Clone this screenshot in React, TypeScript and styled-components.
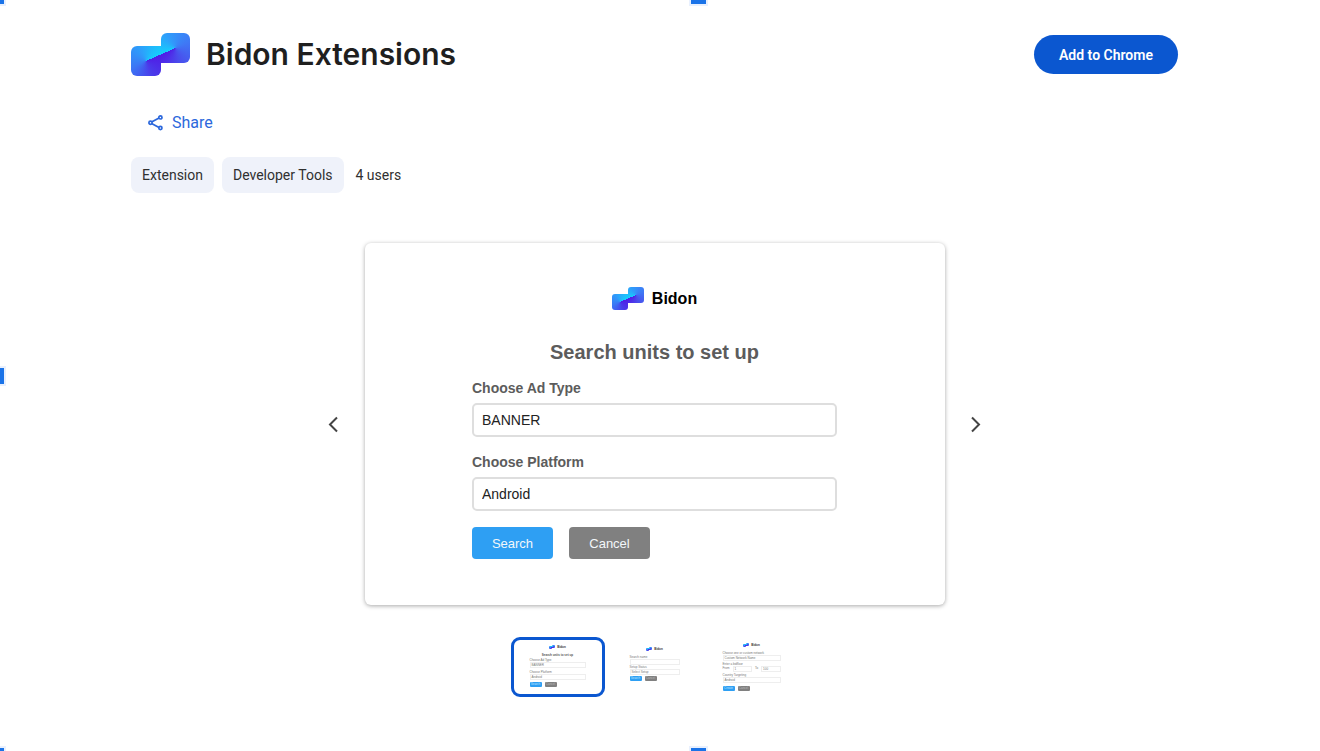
import React, { useState } from "react";
import styled, { createGlobalStyle } from "styled-components";

const GlobalStyle = createGlobalStyle`
  *, *::before, *::after { box-sizing: border-box; }
  body { margin: 0; background: #fff; color: #1f1f1f; font-family: Roboto, "Liberation Sans", sans-serif; }
  button, select { font: inherit; margin: 0; cursor: pointer; }
  h1, h2 { margin: 0; }
`;

const Page = styled.div`
  position: relative;
  min-height: 100vh;
  padding: 33px 142px 48px 131px;
  overflow: hidden;
`;

/* Selection handles that lie over the edges of the page */
const Handle = styled.span<{ $x: string; $y: string; $w: number; $h: number }>`
  position: absolute;
  left: ${(p) => p.$x};
  top: ${(p) => p.$y};
  width: ${(p) => p.$w}px;
  height: ${(p) => p.$h}px;
  background: #1a73e8;
  box-shadow: 0 0 0 2px #e8f0fe;
`;

const Header = styled.header`
  display: flex;
  align-items: center;
  gap: 16px;
`;

const Title = styled.h1`
  flex: 1;
  font-family: Inter, Roboto, sans-serif;
  font-size: 30px;
  line-height: 43px;
  font-weight: 600;
`;

const AddButton = styled.button`
  width: 144px;
  height: 39px;
  border: 0;
  border-radius: 20px;
  background: #0b57d0;
  color: #fff;
  font-size: 14px;
  font-weight: 600;
`;

const LogoBox = styled.span<{ $s: number }>`
  display: flex;
  flex: none;
  width: ${(p) => p.$s * 2 - (p.$s > 20 ? 1 : 0)}px;
  height: ${(p) => Math.round(p.$s * 1.43)}px;
`;

const LogoTile = styled.span<{ $s: number; $upper?: boolean }>`
  flex: 1 0 0;
  height: ${(p) => p.$s}px;
  align-self: ${(p) => (p.$upper ? "flex-start" : "flex-end")};
  border-radius: ${(p) => {
    const r = Math.round(p.$s / 5);
    return p.$upper ? `${r}px ${r}px ${r}px 0` : `${r}px 0 ${r}px ${r}px`;
  }};
  background: ${(p) =>
    p.$upper
      ? "conic-gradient(from 246deg, #16cdfc, #2f9dfb 22%, #3f78f5 50%, #4a4cec 78%, #501de6)"
      : "conic-gradient(from 66deg, #501de6, #4a3cea 25%, #3b78f5 50%, #2d9ffb 75%, #16cdfc)"};
`;

function Logo({ size }: { size: number }) {
  return (
    <LogoBox $s={size} aria-hidden="true">
      <LogoTile $s={size} />
      <LogoTile $s={size} $upper />
    </LogoBox>
  );
}

const ShareButton = styled.button`
  display: flex;
  align-items: center;
  gap: 8px;
  height: 36px;
  margin-top: 28px;
  padding: 0 16px;
  border: 0;
  background: none;
  color: #2c68dc;
  font-size: 16px;
`;

const Meta = styled.div`
  display: flex;
  align-items: center;
  gap: 8px;
  margin-top: 17px;
  font-size: 14px;
  line-height: 36px;
  color: #303030;
`;

const Chip = styled.a`
  padding: 0 11px;
  border-radius: 8px;
  background: #eff2fa;
  color: inherit;
  text-decoration: none;
`;

const Users = styled.span`
  margin-left: 4px;
`;

const Carousel = styled.section`
  display: flex;
  align-items: center;
  justify-content: center;
  gap: 19px;
  margin-top: 50px;
`;

const ArrowButton = styled.button`
  display: flex;
  flex: none;
  padding: 0;
  border: 0;
  background: none;
`;

const Slide = styled.div`
  flex: 0 1 580px;
  display: flex;
  flex-direction: column;
  align-items: center;
  padding: 44px 24px 46px;
  border-radius: 6px;
  background: #fff;
  box-shadow: 0 1px 4px rgba(0, 0, 0, 0.34);
  font-family: "Liberation Sans", Arial, sans-serif;
`;

const Brand = styled.div`
  display: flex;
  align-items: center;
  gap: 8px;
  height: 23px;
  font-size: 16px;
  font-weight: 700;
  color: #000;
`;

const Form = styled.form`
  width: 100%;
  max-width: 365px;
  display: flex;
  flex-direction: column;
  margin-top: 30px;
`;

const FormTitle = styled.h2`
  text-align: center;
  font-size: 20px;
  line-height: 24px;
  color: #5c5c5c;
`;

const Field = styled.div`
  display: flex;
  flex-direction: column;
  gap: 6px;
  margin-bottom: 16px;
  &:first-of-type { margin-top: 15px; }
`;

const Label = styled.label`
  font-size: 14px;
  line-height: 18px;
  font-weight: 700;
  color: #5c5c5c;
`;

const Select = styled.select`
  appearance: none;
  width: 100%;
  height: 34px;
  padding: 0 8px;
  border: 2px solid #dedede;
  border-radius: 5px;
  background: #fff;
  color: #222;
  font-size: 14px;
`;

const Actions = styled.div`
  display: flex;
  gap: 16px;
`;

const FormButton = styled.button<{ $muted?: boolean }>`
  width: 81px;
  height: 32px;
  border: 0;
  border-radius: 4px;
  background: ${(p) => (p.$muted ? "#808080" : "#2e9ff3")};
  color: #f3f7fa;
  font-size: 13px;
`;

const Thumbs = styled.nav`
  display: flex;
  justify-content: center;
  gap: 3px;
  margin-top: 32px;
`;

const Thumb = styled.button<{ $active: boolean }>`
  display: flex;
  flex-direction: column;
  align-items: center;
  width: 94px;
  height: 60px;
  padding: 3px 0;
  border: 3px solid ${(p) => (p.$active ? "#0b57d0" : "transparent")};
  border-radius: 9px;
  background: #fff;
  font-family: "Liberation Sans", Arial, sans-serif;
  font-size: 3px;
  line-height: 4px;
  color: #777;
`;

const MiniInput = styled.span`
  flex: 1;
  min-height: 6px;
  padding-left: 1px;
  border: 1px solid #eee;
`;

const MiniBody = styled.span<{ $w: number; $gap: number }>`
  display: flex;
  flex-direction: column;
  width: ${(p) => p.$w}px;
  text-align: left;
  ${MiniInput} { margin-bottom: ${(p) => p.$gap}px; }
`;

const MiniBrand = styled.span<{ $top: number }>`
  display: flex;
  align-items: center;
  justify-content: center;
  gap: 2px;
  margin: ${(p) => p.$top}px 0 4px;
  font-weight: 700;
  color: #333;
`;

const MiniTitle = styled.span`
  text-align: center;
  font-weight: 700;
  color: #555;
  margin-bottom: 1px;
`;

const MiniLabel = styled.span`
  white-space: nowrap;
`;

const MiniRow = styled.span<{ $top?: number }>`
  display: flex;
  gap: 3px;
  margin-top: ${(p) => p.$top ?? 0}px;
`;

const MiniButton = styled.span<{ $muted?: boolean }>`
  width: 12px;
  height: 5px;
  border-radius: 1px;
  text-align: center;
  color: ${(p) => (p.$muted ? "#bbb" : "#bfe2ff")};
  background: ${(p) => (p.$muted ? "#808080" : "#2e9ff3")};
`;

function MiniActions({ primary, top }: { primary: string; top: number }) {
  return (
    <MiniRow $top={top}>
      <MiniButton>{primary}</MiniButton>
      <MiniButton $muted>Cancel</MiniButton>
    </MiniRow>
  );
}

function ShareIcon() {
  return (
    <svg width="17" height="17" viewBox="0 0 17 17" fill="none" stroke="currentColor" strokeWidth="1.7" aria-hidden="true">
      <path d="M4.6 8 12 3.9M4.6 9.4 12 13.5" />
      <circle cx="3.5" cy="8.7" r="1.6" />
      <circle cx="13.4" cy="3.4" r="1.6" />
      <circle cx="13.4" cy="14" r="1.6" />
    </svg>
  );
}

function Chevron({ next }: { next?: boolean }) {
  return (
    <svg width="24" height="24" viewBox="0 0 24 24" fill="none" stroke="#444" strokeWidth="2" aria-hidden="true">
      <path d={next ? "M8 5.5 15 12.5 8 19.5" : "M15 5.5 8 12.5 15 19.5"} />
    </svg>
  );
}

export default function App() {
  const [active, setActive] = useState(0);
  const step = (n: number) => setActive((active + n + 3) % 3);

  return (
    <>
      <GlobalStyle />
      <Page>
        <Header>
          <Logo size={30} />
          <Title>Bidon Extensions</Title>
          <AddButton>Add to Chrome</AddButton>
        </Header>

        <ShareButton>
          <ShareIcon />
          Share
        </ShareButton>

        <Meta>
          <Chip href="#extensions">Extension</Chip>
          <Chip href="#developer-tools">Developer Tools</Chip>
          <Users>4 users</Users>
        </Meta>

        <Carousel>
          <ArrowButton aria-label="Previous" onClick={() => step(-1)}>
            <Chevron />
          </ArrowButton>
          <Slide>
            <Brand>
              <Logo size={16} />
              Bidon
            </Brand>
            <Form onSubmit={(e) => e.preventDefault()}>
              <FormTitle>Search units to set up</FormTitle>
              <Field>
                <Label htmlFor="ad-type">Choose Ad Type</Label>
                <Select id="ad-type">
                  <option>BANNER</option>
                </Select>
              </Field>
              <Field>
                <Label htmlFor="platform">Choose Platform</Label>
                <Select id="platform">
                  <option>Android</option>
                </Select>
              </Field>
              <Actions>
                <FormButton type="submit">Search</FormButton>
                <FormButton type="button" $muted>Cancel</FormButton>
              </Actions>
            </Form>
          </Slide>
          <ArrowButton aria-label="Next" onClick={() => step(1)}>
            <Chevron next />
          </ArrowButton>
        </Carousel>

        <Thumbs>
          <Thumb $active={active === 0} onClick={() => setActive(0)}>
            <MiniBody $w={56} $gap={2}>
              <MiniBrand $top={2}><Logo size={3} />Bidon</MiniBrand>
              <MiniTitle>Search units to set up</MiniTitle>
              <MiniLabel>Choose Ad Type</MiniLabel>
              <MiniInput>BANNER</MiniInput>
              <MiniLabel>Choose Platform</MiniLabel>
              <MiniInput>Android</MiniInput>
              <MiniActions primary="Search" top={0} />
            </MiniBody>
          </Thumb>
          <Thumb $active={active === 1} onClick={() => setActive(1)}>
            <MiniBody $w={50} $gap={0}>
              <MiniBrand $top={4}><Logo size={3} />Bidon</MiniBrand>
              <MiniLabel>Search name</MiniLabel>
              <MiniInput />
              <MiniLabel>Setup Status</MiniLabel>
              <MiniInput>Select Setup</MiniInput>
              <MiniActions primary="Search" top={1} />
            </MiniBody>
          </Thumb>
          <Thumb $active={active === 2} onClick={() => setActive(2)}>
            <MiniBody $w={58} $gap={1}>
              <MiniBrand $top={0}><Logo size={3} />Bidon</MiniBrand>
              <MiniLabel>Choose one or custom network</MiniLabel>
              <MiniInput>Custom Network Name</MiniInput>
              <MiniLabel>Enter a bidfloor</MiniLabel>
              <MiniRow>
                From <MiniInput>1</MiniInput> To <MiniInput>100</MiniInput>
              </MiniRow>
              <MiniLabel>Country Targeting</MiniLabel>
              <MiniInput>Android</MiniInput>
              <MiniActions primary="Create" top={2} />
            </MiniBody>
          </Thumb>
        </Thumbs>

        <Handle $x="0" $y="0" $w={4} $h={4} />
        <Handle $x="691px" $y="0" $w={15} $h={4} />
        <Handle $x="0" $y="calc(50% - 8px)" $w={4} $h={16} />
        <Handle $x="0" $y="calc(100% - 3px)" $w={4} $h={3} />
        <Handle $x="691px" $y="calc(100% - 3px)" $w={15} $h={3} />
      </Page>
    </>
  );
}
